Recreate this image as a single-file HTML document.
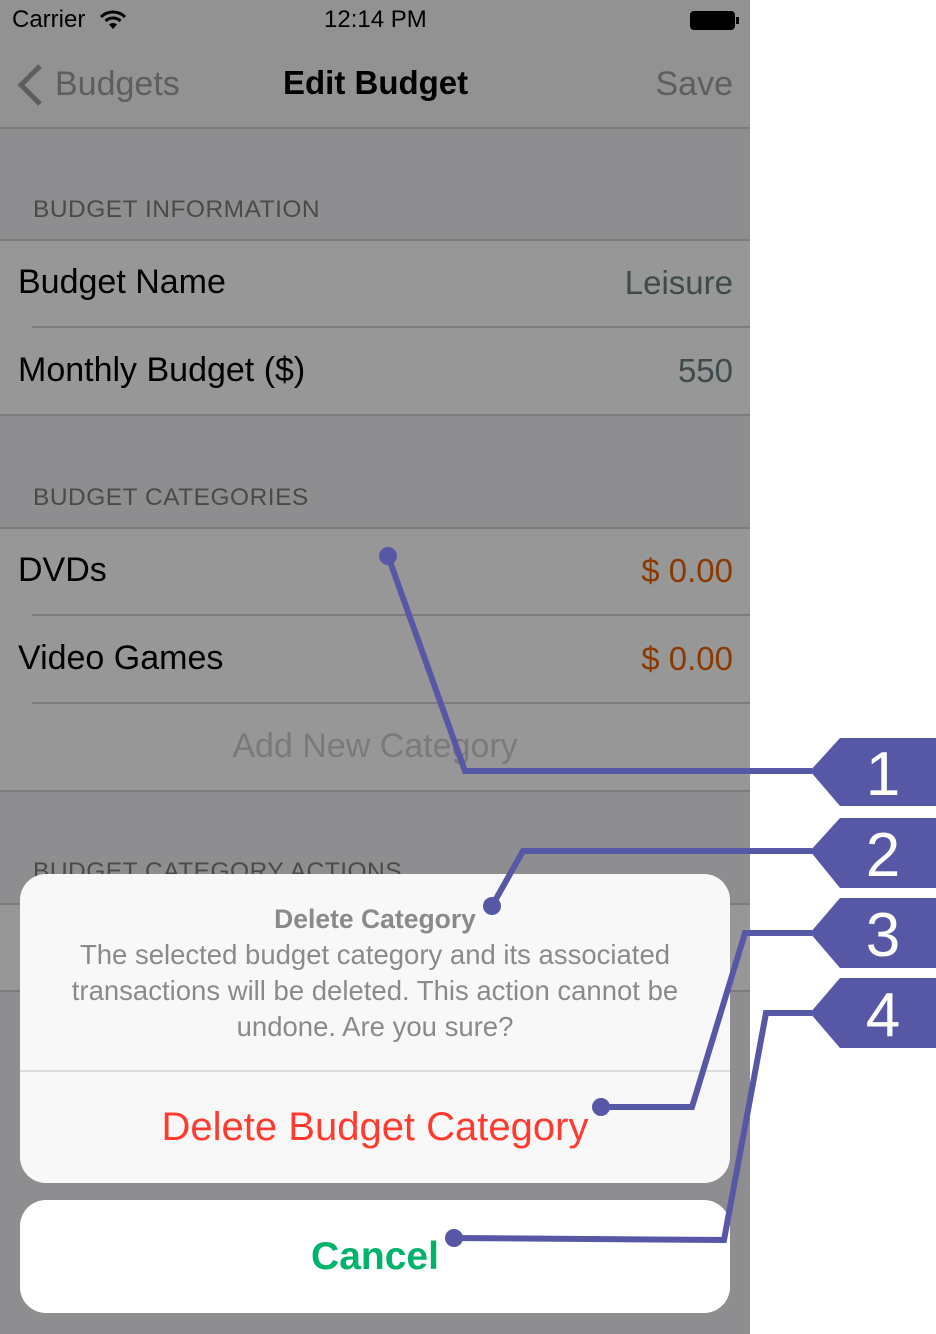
<!DOCTYPE html>
<html><head><meta charset="utf-8"><style>
*{margin:0;padding:0;box-sizing:border-box}
body{width:936px;height:1334px;background:#fff;position:relative;overflow:hidden;font-family:"Liberation Sans",sans-serif}
#app{position:absolute;left:0;top:0;width:750px;height:1334px;background:#8e8e90}
.a{position:absolute;white-space:nowrap}
.cell{position:absolute;left:0;width:750px;background:#979797}
.line{position:absolute;height:2px;background:#7c7c7c}
.h{color:#4a4a4a;font-size:24.5px;left:33px;letter-spacing:0.5px}
.t{font-size:34px;color:#000;left:18px}
.v{font-size:33px;right:17px;color:#3f4a4a}
.o{color:#8a3a00}
</style></head><body>
<div id="app">
<div class="a" style="left:0;top:0;width:750px;height:128px;background:#929292"></div>
<div class="a" style="left:12px;top:6px;font-size:24px;color:#000">Carrier</div>
<svg class="a" style="left:100px;top:10px" width="26" height="20" viewBox="0 0 26 20"><path d="M1 7 A17 17 0 0 1 25 7" stroke="#000" stroke-width="3" fill="none"/><path d="M5.5 11 A11 11 0 0 1 20.5 11" stroke="#000" stroke-width="3" fill="none"/><path d="M13 19 L9 14.5 A6 6 0 0 1 17 14.5Z" fill="#000"/></svg>
<div class="a" style="left:324px;top:6px;font-size:24px;color:#000">12:14 PM</div>
<div class="a" style="left:690px;top:11px;width:45px;height:19px;border:2px solid #000;border-radius:4px;background:#000"></div>
<div class="a" style="left:736px;top:17px;width:3px;height:7px;background:#000"></div>
<svg class="a" style="left:16px;top:64px" width="28" height="42"><path d="M24 2 L5 21 L24 40" stroke="#5e5e5e" stroke-width="5" fill="none"/></svg>
<div class="a" style="left:55px;top:65px;font-size:34px;color:#5e5e5e">Budgets</div>
<div class="a" style="left:283px;top:64px;font-size:33px;color:#000;font-weight:bold">Edit Budget</div>
<div class="a" style="right:17px;top:65px;font-size:34px;color:#5e5e5e">Save</div>
<div class="line" style="left:0;top:127px;width:750px"></div>

<div class="a h" style="top:196px">BUDGET INFORMATION</div>
<div class="cell" style="top:239px;height:175px"></div>
<div class="line" style="left:0;top:239px;width:750px"></div>
<div class="a t" style="top:263px">Budget Name</div><div class="a v" style="top:264px">Leisure</div>
<div class="line" style="left:32px;top:326px;width:718px"></div>
<div class="a t" style="top:351px">Monthly Budget ($)</div><div class="a v" style="top:352px">550</div>
<div class="line" style="left:0;top:414px;width:750px"></div>

<div class="a h" style="top:484px">BUDGET CATEGORIES</div>
<div class="cell" style="top:527px;height:263px"></div>
<div class="line" style="left:0;top:527px;width:750px"></div>
<div class="a t" style="top:551px">DVDs</div><div class="a v o" style="top:552px">$ 0.00</div>
<div class="line" style="left:32px;top:614px;width:718px"></div>
<div class="a t" style="top:639px">Video Games</div><div class="a v o" style="top:640px">$ 0.00</div>
<div class="line" style="left:32px;top:702px;width:718px"></div>
<div class="a" style="left:0;width:750px;text-align:center;top:727px;font-size:34px;color:#7a7a7a">Add New Category</div>
<div class="line" style="left:0;top:790px;width:750px"></div>

<div class="a h" style="top:858px">BUDGET CATEGORY ACTIONS</div>
<div class="cell" style="top:903px;height:87px"></div>
<div class="line" style="left:0;top:903px;width:750px"></div>
<div class="line" style="left:0;top:990px;width:750px"></div>

<div class="a" style="left:20px;top:874px;width:710px;height:309px;background:#f8f8f8;border-radius:26px;overflow:hidden">
 <div class="a" style="left:0;width:710px;text-align:center;top:30px;font-size:26.5px;font-weight:bold;color:#8a8a8a">Delete Category</div>
 <div class="a" style="left:0;width:710px;text-align:center;top:63px;font-size:27.5px;line-height:36px;color:#8a8a8a;white-space:normal;padding:0 30px">The selected budget category and its associated transactions will be deleted. This action cannot be undone. Are you sure?</div>
 <div class="a" style="left:0;top:196px;width:710px;height:2px;background:#dcdcdc"></div>
 <div class="a" style="left:0;width:710px;text-align:center;top:231px;font-size:40px;color:#ff3b30">Delete Budget Category</div>
</div>
<div class="a" style="left:20px;top:1200px;width:710px;height:113px;background:#fff;border-radius:26px">
 <div class="a" style="left:0;width:710px;text-align:center;top:35px;font-size:39px;font-weight:bold;color:#00b36b">Cancel</div>
</div>
</div>

<svg class="a" style="left:0;top:0" width="936" height="1334">
<g fill="#5658a6">
<path d="M810 771 L840 738 L936 738 L936 806 L840 806Z"/>
<path d="M810 851 L840 818 L936 818 L936 888 L840 888Z"/>
<path d="M810 933 L840 898 L936 898 L936 968 L840 968Z"/>
<path d="M810 1013 L840 978 L936 978 L936 1048 L840 1048Z"/>
<circle cx="388" cy="556" r="9"/><circle cx="492" cy="906" r="9"/><circle cx="601" cy="1107" r="9"/><circle cx="454" cy="1238" r="9"/>
</g>
<g stroke="#5658a6" stroke-width="6" fill="none">
<path d="M388 556 L465 771 L812 771"/>
<path d="M492 906 L523 851 L812 851"/>
<path d="M601 1107 L692 1107 L745 933 L812 933"/>
<path d="M454 1238 L724 1240 L766 1013 L812 1013"/>
</g>
<g fill="#fff" font-family="Liberation Sans,sans-serif" font-size="62" text-anchor="middle">
<text x="883" y="795">1</text><text x="883" y="876">2</text><text x="883" y="956">3</text><text x="883" y="1036">4</text>
</g>
</svg>
</body></html>
